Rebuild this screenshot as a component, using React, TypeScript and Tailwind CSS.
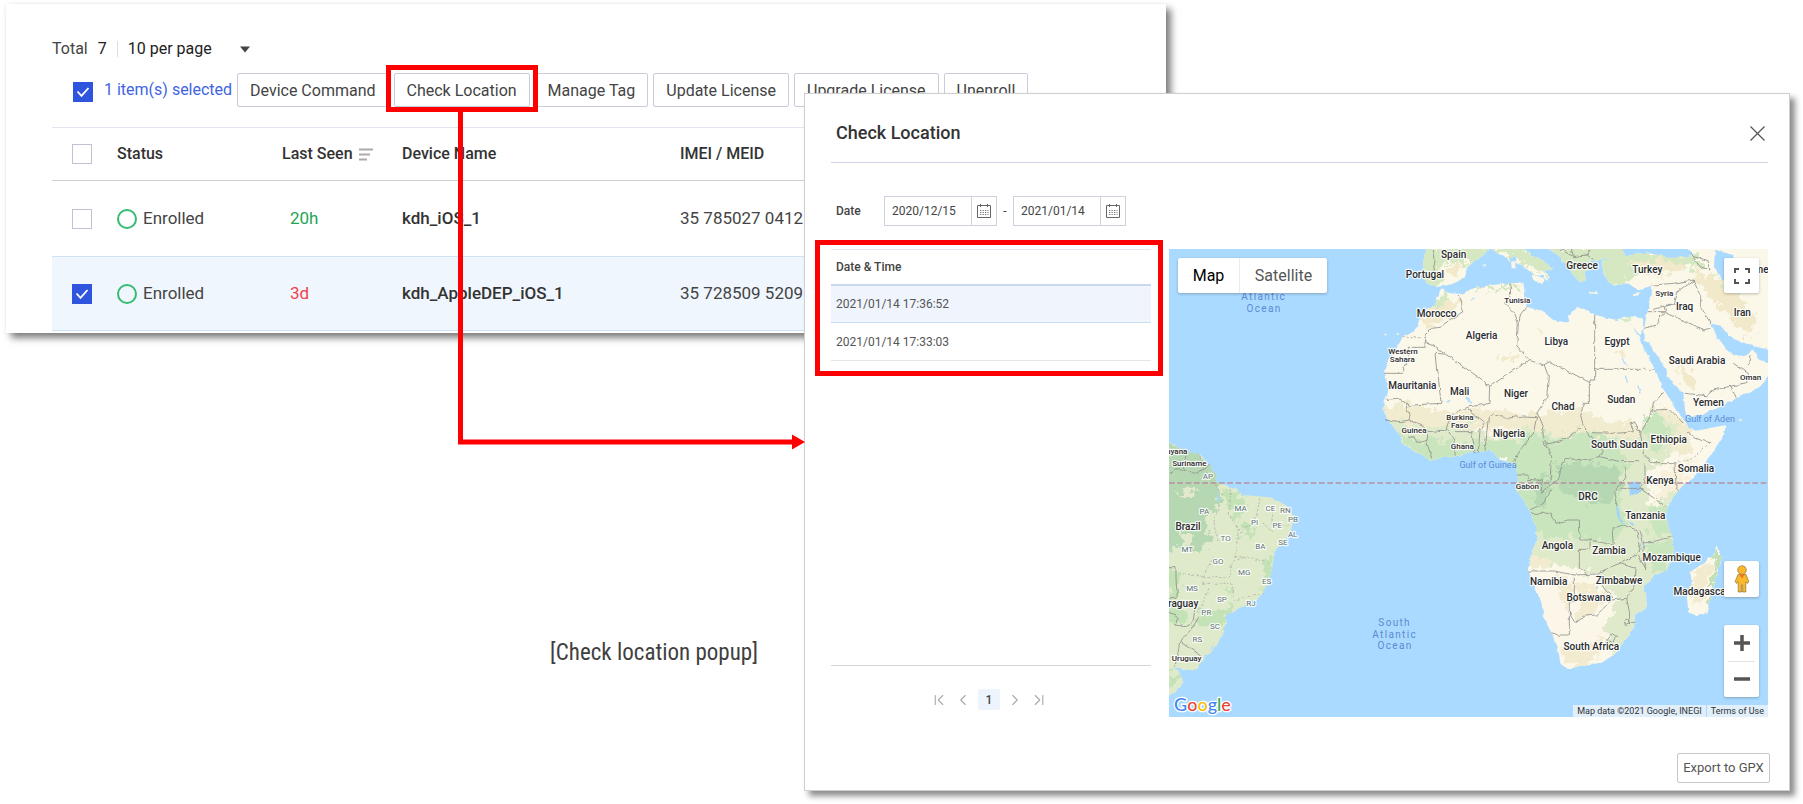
import type { ReactNode } from "react";
import { ChevronFirst, ChevronLast, ChevronLeft, ChevronRight } from "lucide-react";

const devices = [
  { name: "kdh_iOS_1", seen: "20h", seenClass: "text-[#23a455]", imei: "35 785027 0412", selected: false },
  { name: "kdh_AppleDEP_iOS_1", seen: "3d", seenClass: "text-[#f04349]", imei: "35 728509 5209", selected: true },
];

const locations = [
  { time: "2021/01/14 17:36:52", active: true },
  { time: "2021/01/14 17:33:03", active: false },
];

function Checkbox({ label, checked = false }: { label: string; checked?: boolean }) {
  return (
    <span className="relative block size-5 shrink-0">
      <input
        type="checkbox"
        aria-label={label}
        defaultChecked={checked}
        className="peer block size-5 appearance-none border border-[#bfc2d4] bg-white checked:border-[#2f55df] checked:bg-[#2f55df]"
      />
      <svg viewBox="0 0 20 20" className="pointer-events-none absolute inset-0 hidden size-5 peer-checked:block">
        <path d="M4.5 9.5 L8.5 13.8 L15.5 6" fill="none" stroke="#fff" strokeWidth="1.8" />
      </svg>
    </span>
  );
}

function ToolButton({ children }: { children: ReactNode }) {
  return (
    <button
      type="button"
      className="block h-[34px] rounded-xs border border-[#c9ccda] bg-white px-3 pt-[2px] text-base whitespace-nowrap text-[#444]"
    >
      {children}
    </button>
  );
}

function DevicePanel() {
  return (
    <section className="mr-[35.35%] ml-[6px] bg-white pt-[33px] pb-[2px] pl-[46px] shadow-[5px_5px_7px_rgba(0,0,0,0.5),0_0_4px_rgba(0,0,0,0.06)]">
      <div className="flex h-6 items-center text-base text-[#222]">
        <span className="text-[#444]">Total</span>
        <span className="ml-[10px]">7</span>
        <span className="mx-[10px] h-4 w-px bg-[#dcdce6]" />
        <label className="relative flex items-center">
          <select aria-label="Items per page" className="w-32 appearance-none bg-transparent text-[#222]">
            <option>10 per page</option>
          </select>
          <svg viewBox="0 0 10 6" className="pointer-events-none absolute right-[6px] h-[7px] w-[10px]">
            <path d="M0 0 H10 L5 6 Z" fill="#444" />
          </svg>
        </label>
      </div>

      <div className="mt-3 flex items-center gap-[5px] pl-[21px]">
        <div className="flex w-[159px] shrink-0 items-end gap-[11px]">
          <Checkbox label="Clear selection" checked />
          <span className="text-base whitespace-nowrap text-[#4064e4]">1 item(s) selected</span>
        </div>
        <ToolButton>Device Command</ToolButton>
        <div className="relative z-20">
          <ToolButton>Check Location</ToolButton>
          <span className="pointer-events-none absolute -inset-x-2 -top-2 -bottom-[5px] border-5 border-[#f00]" />
          <svg
            viewBox="0 0 348 340"
            className="pointer-events-none absolute top-full left-16 mt-[5px] h-[340px] w-[348px]"
          >
            <path d="M2.5 0 V330 H336" fill="none" stroke="#f00" strokeWidth="5" />
            <path d="M334 322.500 L347 330 L334 337.500 Z" fill="#f00" />
          </svg>
        </div>
        <ToolButton>Manage Tag</ToolButton>
        <ToolButton>Update License</ToolButton>
        <ToolButton>Upgrade License</ToolButton>
        <ToolButton>Unenroll</ToolButton>
      </div>

      <table className="mt-5 w-full table-fixed border-collapse text-left">
        <colgroup>
          <col className="w-[65px]" />
          <col className="w-[165px]" />
          <col className="w-[120px]" />
          <col className="w-[278px]" />
          <col />
        </colgroup>
        <thead>
          <tr className="h-[53px] border-t border-b border-t-[#e4e4ee] border-b-[#d0d0d4] text-base text-[#333]">
            <th className="pl-5">
              <Checkbox label="Select all devices" />
            </th>
            <th className="font-medium">Status</th>
            <th className="font-medium">
              <span className="flex items-center gap-[6px]">
                Last Seen
                <svg viewBox="0 0 14 13" className="h-[13px] w-[14px]">
                  <path d="M0 1.500 H14 M0 6.500 H11 M0 11.500 H8" stroke="#aaa" strokeWidth="2" />
                </svg>
              </span>
            </th>
            <th className="font-medium">Device Name</th>
            <th className="font-medium">IMEI / MEID</th>
          </tr>
        </thead>
        <tbody>
          {devices.map((d) => (
            <tr
              key={d.name}
              className={
                d.selected
                  ? "h-[74px] border-y border-[#cde2f5] bg-[#f0f6fd] text-[17px] text-[#444]"
                  : "h-[76px] text-[17px] text-[#444]"
              }
            >
              <td className="pl-5">
                <Checkbox label={`Select ${d.name}`} checked={d.selected} />
              </td>
              <td>
                <span className="flex items-center gap-[6px]">
                  <span className="size-5 rounded-full border-2 border-[#36bb72]" />
                  Enrolled
                </span>
              </td>
              <td className={d.seenClass}>
                <span className="pl-2">{d.seen}</span>
              </td>
              <td className="font-medium text-[#333]">{d.name}</td>
              <td>{d.imei}</td>
            </tr>
          ))}
        </tbody>
      </table>
    </section>
  );
}

function DateField({ label, value }: { label: string; value: string }) {
  return (
    <div className="flex h-[30px] w-[113px] border border-[#cfd1df]">
      <input aria-label={label} defaultValue={value} className="w-[86px] min-w-0 pl-[7px] text-xs text-[#444]" />
      <button
        type="button"
        aria-label={`${label} calendar`}
        className="flex flex-1 items-center justify-center border-l border-[#cfd1df]"
      >
        <svg viewBox="0 0 14 14" className="size-[14px]" fill="none" stroke="#666">
          <path d="M0.5 1.500 H13.500 V13.500 H0.500 Z M3.500 0 V3 M10.500 0 V3" />
          <path d="M3 6.500 H11.500 M3 8.500 H11.500 M3 10.500 H11.500" strokeDasharray="1.300 1.200" strokeWidth="0.900" />
        </svg>
      </button>
    </div>
  );
}

const AFRICA =
  "M845 148 L830 170 L822 195 L790 215 L775 245 L778 258 L760 275 L728 292 L712 320 L690 350 L685 370 L670 400 L682 425 L684 455 L668 505 L685 540 L700 560 L718 585 L735 615 L770 635 L812 662 L850 652 L890 648 L935 635 L990 632 L1005 640 L1020 660 L1060 668 L1070 690 L1075 718 L1068 750 L1090 780 L1110 815 L1125 855 L1133 900 L1115 935 L1105 990 L1125 1040 L1145 1090 L1152 1130 L1175 1180 L1195 1235 L1202 1275 L1223 1288 L1260 1278 L1320 1272 L1360 1245 L1400 1195 L1422 1160 L1425 1125 L1460 1100 L1458 1060 L1450 1040 L1480 1010 L1520 988 L1540 955 L1537 890 L1520 850 L1518 805 L1540 770 L1570 735 L1600 715 L1650 650 L1690 590 L1698 555 L1670 560 L1610 572 L1585 560 L1570 535 L1545 505 L1525 470 L1505 440 L1495 410 L1475 370 L1455 330 L1435 290 L1418 258 L1440 288 L1452 265 L1445 235 L1400 228 L1370 240 L1305 225 L1280 208 L1250 205 L1228 225 L1225 248 L1180 240 L1145 212 L1100 200 L1095 165 L1090 128 L1050 130 L990 136 L940 145 L905 162 L870 160 Z";
const ASIA =
  "M1452 265 L1458 235 L1465 200 L1475 165 L1476 138 L1450 145 L1430 148 L1405 130 L1360 137 L1335 110 L1325 80 L1330 62 L1360 55 L1420 42 L1460 38 L1520 50 L1580 52 L1600 45 L1575 20 L1830 20 L1830 405 L1800 440 L1730 475 L1680 500 L1630 522 L1580 530 L1575 510 L1570 460 L1530 420 L1510 375 L1480 330 L1455 300 Z";
const GULF =
  "M1652 250 L1685 258 L1712 292 L1765 315 L1830 330 L1830 372 L1795 358 L1777 325 L1755 352 L1710 340 L1690 315 L1668 285 Z";
const EUROPE =
  "M797 20 L790 65 L785 95 L800 130 L835 140 L880 132 L915 112 L922 85 L945 60 L975 40 L1000 20 Z M985 20 L1010 38 L1050 60 L1085 75 L1130 110 L1165 122 L1172 108 L1150 92 L1178 88 L1150 62 L1110 45 L1090 20 Z M1115 105 L1152 108 L1148 132 L1120 120 Z M1052 50 L1070 48 L1068 85 L1055 85 Z M1160 20 L1190 45 L1222 75 L1240 105 L1262 128 L1278 120 L1272 95 L1300 85 L1290 62 L1330 58 L1400 50 L1380 20 Z M1285 155 L1318 158 L1315 163 L1288 160 Z M1415 165 L1442 155 L1430 170 Z M965 75 L975 72 L974 80 Z";
const AMERICA =
  "M20 603 L50 618 L95 638 L130 650 L150 680 L172 712 L165 722 L178 730 L215 740 L250 765 L330 772 L385 800 L400 830 L395 865 L375 905 L345 930 L337 980 L325 1030 L300 1070 L255 1095 L200 1125 L192 1175 L160 1230 L135 1250 L110 1288 L70 1290 L45 1280 L65 1310 L70 1330 L50 1355 L20 1368 Z";
const MADAGASCAR =
  "M1670 918 L1685 955 L1665 1020 L1640 1120 L1610 1128 L1585 1115 L1580 1065 L1595 1035 L1592 995 L1630 970 L1660 945 Z";

const BORDERS = [
  "M898 165 L905 190 L908 215 L880 235 L840 262 L815 265 L795 285 L795 322 L745 322 L742 372 L728 380 V400 L670 400",
  "M795 300 L975 425 L978 437 L992 437 L1107 362 L1150 375 L1170 365 L1290 428 V420 H1304 V225",
  "M850 342 L828 340 L843 490 L757 495 L748 500 L735 485 L712 475 L680 478",
  "M1050 130 L1052 165 L1037 190 L1062 215 L1075 250 L1070 320 L1107 362 M1100 200 L1080 225 L1078 245",
  "M1304 388 H1440 M1153 375 L1165 410 L1160 475 L1130 520 L1140 535 L1150 560 L1145 575 L1160 612 L1210 600 L1260 565",
  "M992 437 L990 490 L930 500 L895 512 L870 530 L858 570 L805 575",
  "M975 632 L980 580 L985 535 L1000 522 L1040 535 L1090 528 L1130 530 L1120 580 L1085 625 L1060 665",
  "M1288 430 V490 L1270 490 L1262 530 L1275 570 L1300 600 L1330 630 L1320 650",
  "M1148 600 L1175 650 L1170 718 M1195 718 L1205 680 L1215 655 L1270 660 L1320 650 L1380 665 L1440 665",
  "M1295 578 L1370 580 L1420 575 L1412 548 L1428 546 L1430 570 L1442 580 L1450 640 L1475 668 L1545 668 L1548 745 L1558 752",
  "M1392 680 L1397 710 L1370 745 L1365 765 L1375 800 M1455 670 V715 L1440 745",
  "M1442 580 L1475 520 L1480 490 L1508 460 M1480 510 L1530 508 L1570 550 M1580 575 L1605 595 L1650 608",
  "M1385 745 H1440 L1518 800 M1450 905 L1480 905 L1537 890 M1390 855 L1430 870 L1440 930 L1420 945",
  "M1113 820 H1175 L1185 850 L1225 840 L1258 840 L1260 900 L1290 900 L1360 915 L1356 865 L1390 855",
  "M1290 895 V928 L1258 928 V985 L1278 1000 M1105 993 H1180 L1245 1005 L1310 1002",
  "M1243 1005 V1085 L1228 1085 V1185 L1190 1185 L1175 1178 M1228 1115 L1245 1150 L1275 1128 L1310 1125 L1355 1080 L1400 1075",
  "M1310 1005 L1335 1050 L1365 1075 M1310 1005 L1340 985 L1380 970 L1425 985 L1422 1040 L1400 1075 L1408 1115 L1410 1150 H1425",
  "M1380 970 L1430 945 L1460 990 L1448 960 L1450 905 L1440 870",
  "M1340 1200 L1355 1180 L1370 1190 L1355 1208 Z M1392 1140 L1408 1135 L1412 1152 L1396 1156 Z",
  "M735 485 L750 540 L720 545 L675 540 M750 540 L790 560 L805 575 L800 605 L815 655 M805 600 L770 610 L765 590 L740 592",
  "M885 648 V600 L862 570 M945 640 L935 575 L885 575 M955 638 L960 570 L975 545 L935 520 L925 502",
  "M1070 705 H1105 V718 L1150 722 L1145 760 L1165 740 L1195 718 M1110 810 L1150 790 L1172 750",
  "M1475 135 L1540 130 L1600 120 L1622 170 L1622 200 L1652 250 M1600 122 L1550 158 L1540 190 L1480 208",
  "M1555 188 L1512 200 L1518 218 L1555 235 L1635 270 L1655 262 M1452 265 L1490 255 L1500 228 L1515 215 L1460 215",
  "M1575 460 L1640 467 L1660 450 L1760 428 L1765 400 L1720 370 M1713 438 L1728 475 M1765 375 L1770 345",
  "M820 27 L825 60 L818 100 M1200 27 L1240 50 L1280 45 L1300 58 M1240 50 L1235 27 M1280 45 L1290 27 M1590 40 L1620 80 L1650 90 L1640 60 L1600 50",
  "M20 980 H48 V1020 L52 1070 L30 1075 M27 1115 L55 1130 L45 1155 L80 1160 L100 1140 L105 1105 M117 1130 L90 1175 L60 1205 L125 1250 M60 1205 L45 1280",
  "M60 660 L75 690 L105 700 L130 690 L150 672 M80 632 L75 660 M27 700 L45 690 L75 690",
];

const STATES = [
  "M115 640 L150 720 L190 760 L160 850 L175 905",
  "M215 745 L205 820 L235 870 L225 950 L260 950 L330 970 M300 775 L290 830 L240 880 M340 800 L335 850 L390 860 M235 870 L300 840 L340 880",
  "M60 1000 L130 1010 L160 950 M130 1010 L210 1010 L215 965 L260 950 M130 1030 L215 1030 L225 1080 L310 1060 M115 1120 L150 1040",
  "M728 293 H795 M1440 388 H1484 M1650 608 L1590 660 L1545 668",
];

type Label = [string, number, number];

const COUNTRIES: Label[] = [
  ["Spain", 881, 54], ["Portugal", 795, 115], ["Morocco", 830, 232], ["Algeria", 965, 296], ["Libya", 1189, 314],
  ["Egypt", 1371, 314], ["Greece", 1266, 88], ["Turkey", 1462, 100], ["Iraq", 1574, 211], ["Iran", 1747, 227],
  ["Saudi Arabia", 1611, 372], ["Yemen", 1645, 497], ["Mauritania", 757, 447], ["Mali", 899, 465], ["Niger", 1068, 471],
  ["Chad", 1209, 510], ["Sudan", 1384, 490], ["Nigeria", 1047, 592], ["Ethiopia", 1526, 609], ["South Sudan", 1378, 624],
  ["Somalia", 1608, 696], ["Kenya", 1500, 731], ["DRC", 1284, 781], ["Tanzania", 1456, 837], ["Angola", 1192, 928],
  ["Zambia", 1347, 943], ["Mozambique", 1535, 962], ["Zimbabwe", 1377, 1031], ["Namibia", 1166, 1036],
  ["Botswana", 1286, 1084], ["South Africa", 1294, 1230], ["Madagascar", 1624, 1066], ["Brazil", 84, 869],
  ["Paraguay", 52, 1101],
];

const SMALL_COUNTRIES: Label[] = [
  ["Tunisia", 1072, 189], ["Syria", 1513, 167], ["Oman", 1772, 420], ["Western", 729, 343], ["Sahara", 727, 366],
  ["Burkina", 900, 539], ["Faso", 899, 563], ["Guinea", 762, 579], ["Ghana", 907, 627], ["Gabon", 1102, 748],
  ["Guyana", 42, 641], ["Suriname", 88, 678], ["Uruguay", 80, 1264],
];

const STATE_LABELS: Label[] = [
  ["AP", 144, 717], ["PA", 133, 823], ["MA", 242, 813], ["CE", 331, 813], ["RN", 376, 818], ["PI", 284, 855],
  ["PE", 352, 865], ["PB", 399, 847], ["AL", 398, 890], ["SE", 369, 916], ["TO", 197, 903], ["BA", 301, 927],
  ["MT", 82, 935], ["GO", 174, 972], ["MG", 253, 1006], ["ES", 320, 1032], ["MS", 96, 1054], ["SP", 186, 1086],
  ["RJ", 273, 1097], ["PR", 139, 1126], ["SC", 165, 1168], ["RS", 112, 1206],
];

function WorldMap() {
  return (
    <svg
      viewBox="27 27 1797 1404"
      preserveAspectRatio="xMidYMid slice"
      role="img"
      aria-label="Map"
      className="absolute inset-0 size-full"
    >
      <defs>
        <filter id="coast" x="-5%" y="-5%" width="110%" height="110%">
          <feTurbulence type="fractalNoise" baseFrequency="0.05" numOctaves="2" seed="4" />
          <feDisplacementMap in="SourceGraphic" scale="12" xChannelSelector="R" yChannelSelector="G" />
        </filter>
        <filter id="terrain" x="-10%" y="-10%" width="120%" height="120%">
          <feTurbulence type="fractalNoise" baseFrequency="0.045" numOctaves="3" seed="9" />
          <feDisplacementMap in="SourceGraphic" scale="60" xChannelSelector="R" yChannelSelector="G" />
        </filter>
        <clipPath id="land">
          <path d={AFRICA} />
          <path d={ASIA} />
          <path d={EUROPE} />
          <path d={AMERICA} />
          <path d={MADAGASCAR} />
        </clipPath>
      </defs>

      <rect x="0" y="0" width="1860" height="1460" fill="#aadaff" />

      <g filter="url(#coast)">
        <path d={`${AFRICA} ${ASIA} ${EUROPE} ${MADAGASCAR}`} fill="#fbf7e9" />
        <path d={AMERICA} fill="#dfeacb" />
        <g clipPath="url(#land)">
          <g filter="url(#terrain)">
            <path d="M770 20 H1010 V60 L930 75 L870 60 L830 90 L840 150 H770 Z M1000 20 H1180 V110 L1130 95 Z M1160 20 H1400 V140 H1250 Z M1320 40 L1420 35 L1600 45 L1640 80 L1600 90 L1500 70 L1400 110 L1340 140 Z" fill="#d5e8c2" />
            <path d="M640 500 L760 490 L850 520 L960 505 L1100 525 L1250 500 L1350 540 L1450 560 L1500 490 L1590 560 L1590 640 L1400 640 L1200 590 L950 560 L700 570 Z" fill="#f1ebcf" />
            <path d="M650 545 L720 545 L790 570 L900 550 L1000 590 L1100 560 L1200 590 L1290 560 L1340 600 L1440 590 L1490 510 L1560 560 L1520 650 L1460 700 L1470 800 L1560 740 L1560 1010 L1470 1110 L1440 1190 L1360 1250 L1330 1180 L1370 1080 L1300 1000 L1080 960 L1040 640 L800 690 Z" fill="#dfeacb" />
            <path d="M690 565 L760 600 L820 590 L900 610 L1060 600 L1150 575 L1180 600 L1280 575 L1360 600 L1400 660 L1380 770 L1400 850 L1350 910 L1270 900 L1150 890 L1080 850 L1040 650 L820 690 Z" fill="#c9e5bd" />
            <path d="M1180 680 L1230 665 L1300 670 L1370 680 L1390 720 L1360 785 L1280 790 L1200 750 Z M1130 720 L1175 700 L1160 800 L1110 790 Z" fill="#b5d7b2" />
            <path d="M1470 800 L1560 810 L1550 890 L1470 880 Z M1460 910 L1545 900 L1530 980 L1470 1000 Z M1450 530 L1500 520 L1530 580 L1480 650 Z" fill="#c9e5bd" />
            <path d="M1100 1000 L1230 1010 L1240 1170 L1300 1130 L1340 1180 L1300 1220 L1220 1240 L1180 1190 Z" fill="#fbf6e8" />
            <path d="M1180 1010 L1240 1020 L1225 1120 L1190 1060 Z M1250 1030 L1350 1060 L1300 1120 L1250 1140 Z M1200 1230 L1330 1200 L1300 1265 L1220 1280 Z M1110 940 L1170 960 L1160 985 L1110 985 Z" fill="#f3ebcf" />
            <path d="M1530 690 L1600 650 L1570 740 L1490 780 L1500 710 Z" fill="#f8f0da" />
            <path d="M780 215 L840 180 L900 190 L870 235 L800 265 Z M1020 340 L1070 345 L1060 360 L1010 350 Z M1130 260 L1150 275 L1140 290 Z M1370 330 L1400 345 L1385 355 Z M1600 90 L1700 130 L1800 250 L1760 290 L1690 210 L1630 150 Z M1540 370 L1580 440 L1620 455 L1600 410 Z M1400 70 L1500 60 L1580 80 L1500 110 Z M860 70 L910 75 L890 110 L850 100 Z" fill="#f1e9c9" />
            <path d="M815 170 L870 165 L860 190 L820 210 Z M940 145 L1090 128 L1080 140 L960 155 Z M1380 232 L1412 228 L1400 248 Z M1650 85 L1700 140 L1760 150 L1700 155 Z" fill="#d5e8c2" />
            <path d="M1660 920 L1690 950 L1665 1060 L1640 1120 L1660 1000 Z" fill="#c3e0b4" />
            <path d="M1610 980 L1650 970 L1640 1060 L1600 1110 L1590 1060 Z" fill="#f3ebcf" />
            <path d="M10 600 L120 640 L180 710 L180 790 L140 830 L150 900 L110 940 L70 920 L10 930 Z" fill="#b5d7b2" />
            <path d="M190 740 L240 770 L260 800 L230 850 L200 790 Z M250 850 L290 860 L270 900 L240 890 Z M315 970 L340 930 L330 1020 L310 1060 Z M110 1110 L220 1100 L190 1160 L120 1170 Z M20 980 L60 1000 L50 1090 L90 1150 L20 1160 Z M190 1030 L215 1040 L210 1070 Z M20 1290 L70 1320 L20 1350 Z" fill="#c3e2b5" />
            <path d="M50 880 L100 885 L90 910 L55 905 Z M45 760 L110 745 L95 765 Z M228 900 L245 910 L238 940 Z" fill="#e2eacb" />
          </g>
        </g>
        <path d={GULF} fill="#aadaff" />
        <path d="M1665 30 L1720 45 L1720 130 L1690 125 L1662 80 Z M1400 20 L1430 38 L1460 34 L1520 48 L1580 45 L1560 20 Z" fill="#aadaff" />
        <path d="M1407 725 H1440 V755 L1410 768 Z M1372 790 L1380 830 L1392 855 L1384 852 L1370 820 Z M1440 875 L1452 930 L1446 925 Z M1400 840 L1422 852 L1418 858 Z M1305 1045 L1315 1040 L1312 1050 Z" fill="#9fd2fb" />
        <path d="M140 1240 L160 1210 L155 1225 Z M165 745 L182 790 L172 780 Z" fill="#aadaff" />
        <path d="M860 490 L870 480 M915 470 L935 490 M930 180 L945 174 M1385 355 L1405 378 M1435 440 L1440 460 M1395 405 L1402 425" stroke="#aadaff" strokeWidth="4" />
        <path d="M675 284 h5 M712 282 h5 M1735 540 h12" stroke="#e8efd8" strokeWidth="6" />
      </g>

      <g filter="url(#coast)" fill="none" strokeWidth="2.500">
        <path d={BORDERS.join(" ")} stroke="#8e8e8a" />
        <path d={STATES.join(" ")} stroke="#a9aca3" strokeDasharray="6 6" />
      </g>
      <path d="M27 729 H1824" stroke="#b8909f" strokeWidth="4" strokeDasharray="17 8" />

      <g textAnchor="middle" className="[paint-order:stroke]" strokeLinejoin="round">
        <g fill="#2b2b2b" stroke="#fff" strokeWidth="7" strokeOpacity="0.85" className="font-medium">
          <g fontSize="30">
            {COUNTRIES.map(([t, x, y]) => (
              <text key={t} x={x} y={y}>{t}</text>
            ))}
            <text x="1816" y="100">Turkmenistan</text>
          </g>
          <g fontSize="24">
            {SMALL_COUNTRIES.map(([t, x, y]) => (
              <text key={t} x={x} y={y}>{t}</text>
            ))}
          </g>
        </g>
        <g fill="#5d7372" stroke="#fff" strokeWidth="7" strokeOpacity="0.85" fontSize="24">
          {STATE_LABELS.map(([t, x, y]) => (
            <text key={t} x={x} y={y}>{t}</text>
          ))}
        </g>
        <g fill="#5a8ad4" fontSize="27">
          <text x="984" y="683">Gulf of Guinea</text>
          <text x="1650" y="547">Gulf of Aden</text>
          <g fontSize="30" className="tracking-[4px]">
            <text x="311" y="181">Atlantic</text>
            <text x="312" y="215">Ocean</text>
            <text x="704" y="1159">South</text>
            <text x="704" y="1194">Atlantic</text>
            <text x="705" y="1228">Ocean</text>
          </g>
        </g>
      </g>

      <text x="42" y="1414" fontSize="54" stroke="#fff" strokeWidth="8" strokeLinejoin="round" className="font-[Lato] font-medium [paint-order:stroke]">
        <tspan fill="#4285f4">G</tspan>
        <tspan fill="#ea4335">o</tspan>
        <tspan fill="#fbbc05">o</tspan>
        <tspan fill="#4285f4">g</tspan>
        <tspan fill="#34a853">l</tspan>
        <tspan fill="#ea4335">e</tspan>
      </text>
    </svg>
  );
}

function MapView() {
  return (
    <div className="relative h-[468px] overflow-hidden">
      <WorldMap />
      <div className="absolute top-[9px] left-[9px] flex h-[35px] rounded-xs bg-white text-base shadow-[0_1px_3px_rgba(0,0,0,0.25)]">
        <button type="button" className="w-[61px] text-black">Map</button>
        <button type="button" className="w-[88px] border-l border-[#ebebeb] text-[#565656]">Satellite</button>
      </div>
      <button
        type="button"
        aria-label="Toggle fullscreen"
        className="absolute top-[9px] right-[9px] flex size-[35px] items-center justify-center rounded-xs bg-white shadow-[0_1px_3px_rgba(0,0,0,0.25)]"
      >
        <svg viewBox="0 0 16 16" className="size-4" fill="none" stroke="#555" strokeWidth="2">
          <path d="M1 5 V1 H5 M11 1 H15 V5 M15 11 V15 H11 M5 15 H1 V11" />
        </svg>
      </button>
      <div className="absolute right-[9px] bottom-5 flex w-[35px] flex-col gap-7">
        <button
          type="button"
          aria-label="Street View"
          className="flex h-9 items-center justify-center rounded-xs bg-white shadow-[0_1px_3px_rgba(0,0,0,0.25)]"
        >
          <svg viewBox="0 0 16 28" className="h-7 w-4" stroke="#8a7440" strokeWidth="0.700">
            <path d="M4 9.500 H12 L14.800 16.500 L13.500 18.500 L11.800 16.800 V27 H8.600 V20 H7.400 V27 H4.200 V16.800 L2.500 18.500 L1.200 16.500 Z" fill="#fbb829" />
            <circle cx="8" cy="5" r="4.300" fill="#fbb829" />
            <path d="M4.800 9.200 H11.200 L8 13.500 Z" fill="#ea7a22" stroke="none" />
          </svg>
        </button>
        <div className="flex h-[72px] flex-col rounded-xs bg-white shadow-[0_1px_3px_rgba(0,0,0,0.25)]">
          <button type="button" aria-label="Zoom in" className="flex flex-1 items-center justify-center">
            <svg viewBox="0 0 16 16" className="size-4" stroke="#555" strokeWidth="3.500">
              <path d="M8 0 V16 M0 8 H16" />
            </svg>
          </button>
          <span className="mx-1 h-px bg-[#e3e3e3]" />
          <button type="button" aria-label="Zoom out" className="flex flex-1 items-center justify-center">
            <svg viewBox="0 0 16 16" className="size-4" stroke="#555" strokeWidth="3.500">
              <path d="M0 8 H16" />
            </svg>
          </button>
        </div>
      </div>
      <div className="absolute right-0 bottom-0 flex h-3 items-center gap-px text-[9px] leading-3 text-[#333]">
        <span className="bg-[#e1effb] px-1">Map data ©2021 Google, INEGI</span>
        <a href="#terms" className="bg-[#e1effb] px-1">Terms of Use</a>
      </div>
    </div>
  );
}

function LocationDialog() {
  return (
    <section
      role="dialog"
      aria-labelledby="dialog-title"
      className="absolute top-[93px] right-[13px] left-[804px] z-10 border border-[#cfcfcf] bg-white pr-[21px] pb-[7px] pl-[26px] shadow-[5px_5px_6px_rgba(0,0,0,0.45)]"
    >
      <header className="flex h-[69px] items-center justify-between border-b border-[#d2d2e4] pt-[10px] pr-[3px] pl-[5px]">
        <h2 id="dialog-title" className="text-lg font-medium text-[#333]">Check Location</h2>
        <button type="button" aria-label="Close">
          <svg viewBox="0 0 15 15" className="size-[15px]" stroke="#555" strokeWidth="1.300">
            <path d="M0.500 0.500 L14.500 14.500 M14.500 0.500 L0.500 14.500" />
          </svg>
        </button>
      </header>

      <div className="mt-[33px] flex items-center pl-[5px] text-xs text-[#444]">
        <span className="w-12 font-medium">Date</span>
        <DateField label="From" value="2020/12/15" />
        <span className="w-4 text-center">-</span>
        <DateField label="To" value="2021/01/14" />
      </div>

      <div className="mt-[23px] grid grid-cols-[320px_1fr] gap-[18px]">
        <div className="flex flex-col justify-between">
          <div className="relative">
            <table className="w-full border-collapse text-left text-xs text-[#555]">
              <thead>
                <tr className="h-[35px] border-t border-b-2 border-t-[#e6e6ee] border-b-[#c9d8ea]">
                  <th className="pl-[5px] font-medium text-[#444]">Date &amp; Time</th>
                </tr>
              </thead>
              <tbody>
                {locations.map((l) => (
                  <tr
                    key={l.time}
                    className={
                      l.active
                        ? "h-[38px] border-b border-[#c9dff2] bg-[#f0f5fd]"
                        : "h-[38px] border-b border-[#e4e4ea]"
                    }
                  >
                    <td className="pl-[5px]">{l.time}</td>
                  </tr>
                ))}
              </tbody>
            </table>
            <span className="pointer-events-none absolute -top-[9px] -right-3 -bottom-[15px] -left-4 border-5 border-[#f00]" />
          </div>
          <nav
            aria-label="Pagination"
            className="flex h-[52px] items-start justify-center gap-[6px] border-t border-[#d4d4d8] pt-[23px] pr-1 text-[#aaa]"
          >
            <button type="button" aria-label="First page" className="flex h-[21px] items-center">
              <ChevronFirst size={18} strokeWidth={1.5} />
            </button>
            <button type="button" aria-label="Previous page" className="flex h-[21px] items-center">
              <ChevronLeft size={18} strokeWidth={1.5} />
            </button>
            <button type="button" aria-current="page" className="h-[21px] w-[22px] rounded-xs bg-[#eef4fd] text-xs font-medium text-[#444]">
              1
            </button>
            <button type="button" aria-label="Next page" className="flex h-[21px] items-center">
              <ChevronRight size={18} strokeWidth={1.5} />
            </button>
            <button type="button" aria-label="Last page" className="flex h-[21px] items-center">
              <ChevronLast size={18} strokeWidth={1.5} />
            </button>
          </nav>
        </div>
        <MapView />
      </div>

      <footer className="-mr-[2px] mt-9 flex justify-end">
        <button type="button" className="h-[30px] w-[93px] rounded-xs border border-[#c8c8c8] text-[13px] text-[#555]">
          Export to GPX
        </button>
      </footer>
    </section>
  );
}

export default function App() {
  return (
    <main className="relative min-h-screen overflow-hidden bg-white pt-1 font-[Roboto,sans-serif]">
      <DevicePanel />
      <LocationDialog />
      <p className="mt-[303px] pl-[550px] font-['Roboto_Condensed','Noto_Sans_Condensed','Open_Sans_Condensed',Lato,sans-serif] text-[23px] text-[#404040]">
        [Check location popup]
      </p>
    </main>
  );
}
